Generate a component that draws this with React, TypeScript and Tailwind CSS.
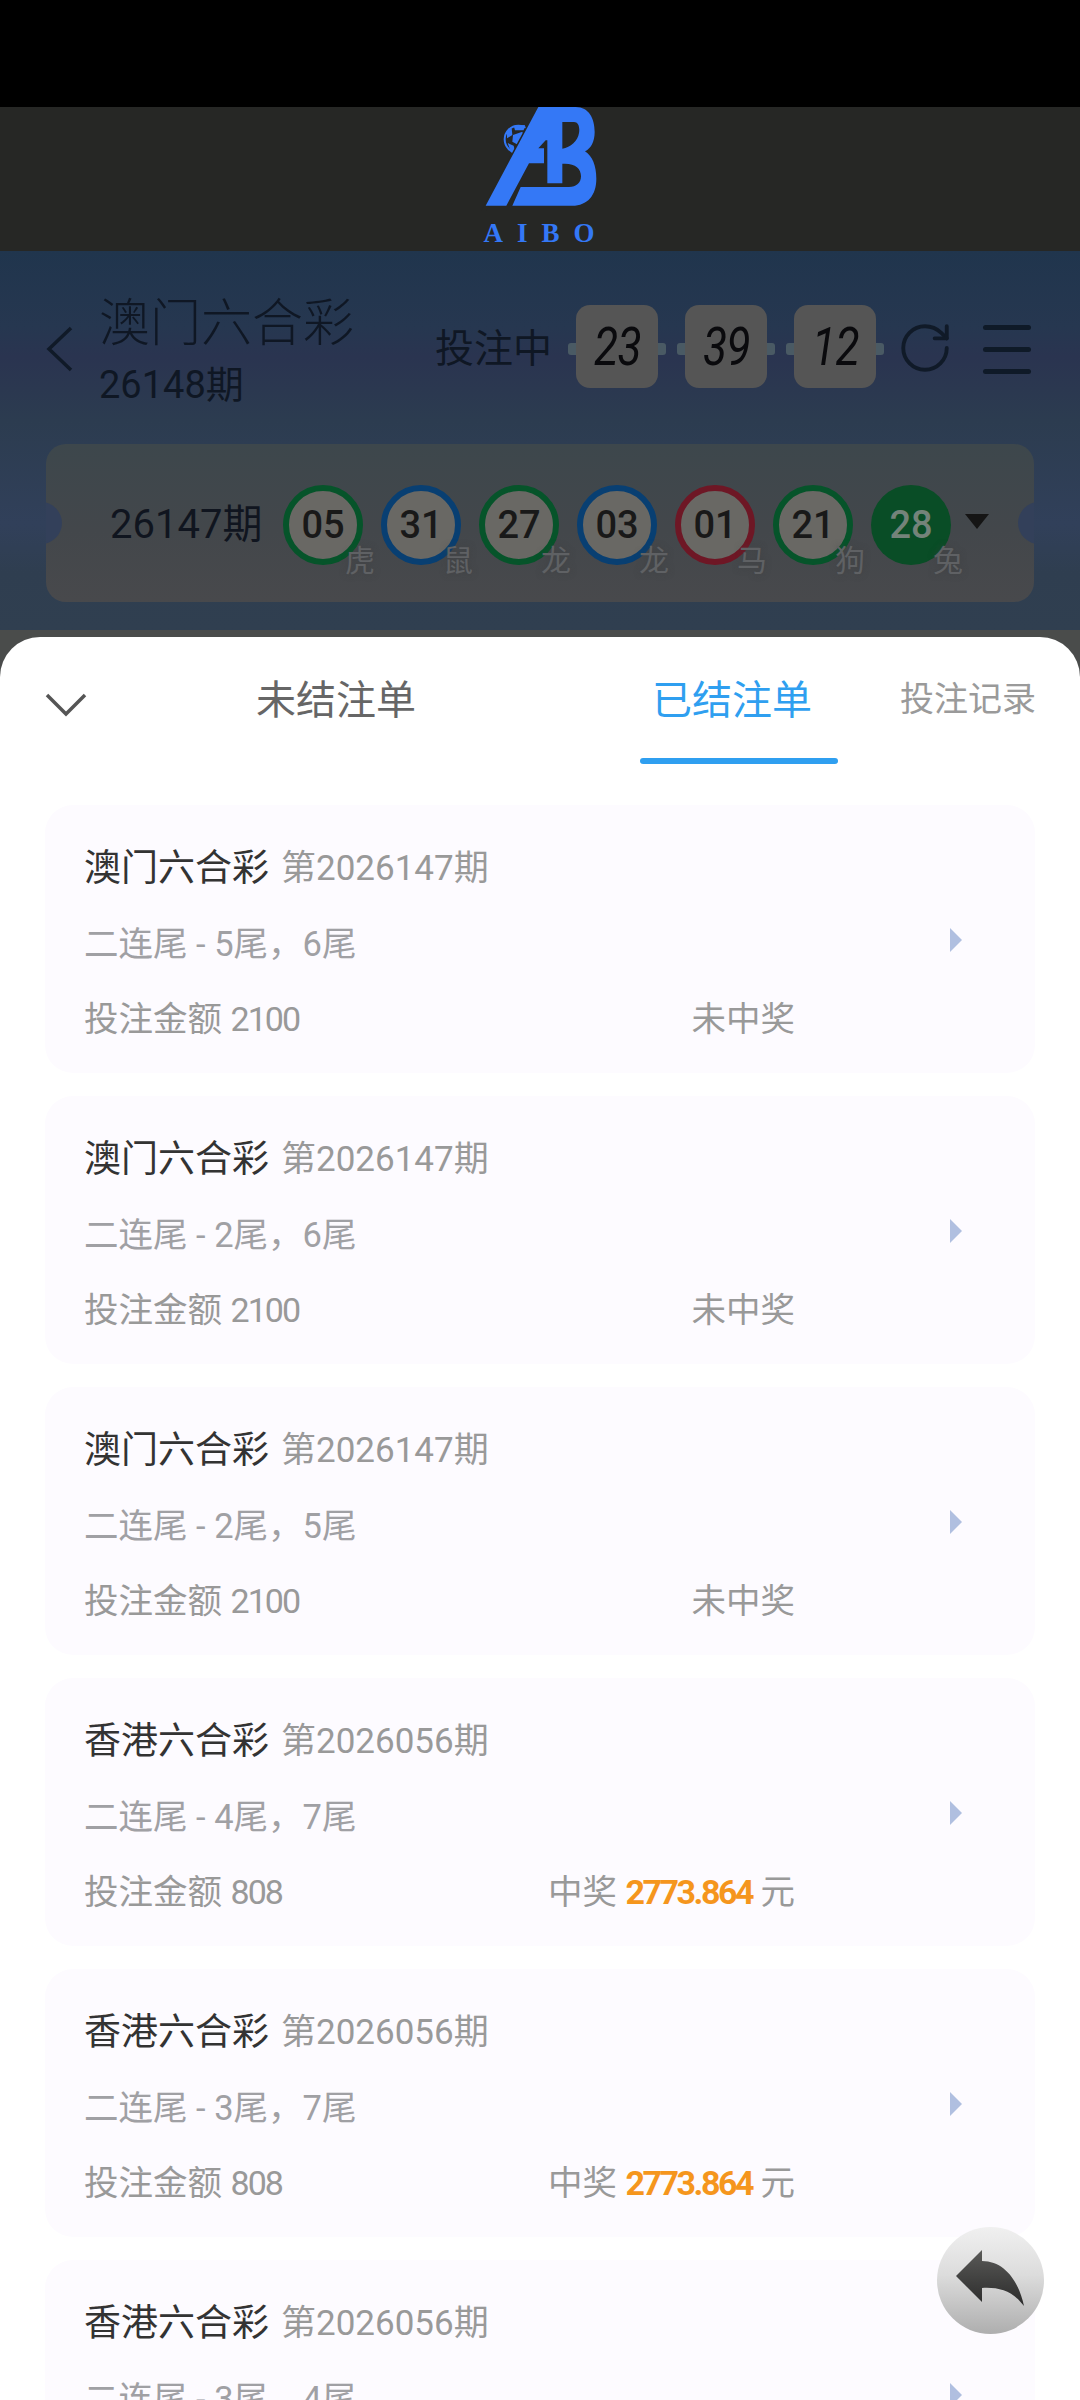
import React from "react";
import { RotateCw } from "lucide-react";

const balls = [
  { n: "05", z: "虎", ring: "border-[#06542a]" },
  { n: "31", z: "鼠", ring: "border-[#083f72]" },
  { n: "27", z: "龙", ring: "border-[#06542a]" },
  { n: "03", z: "龙", ring: "border-[#083f72]" },
  { n: "01", z: "马", ring: "border-[#6e1725]" },
  { n: "21", z: "狗", ring: "border-[#06542a]" },
];

const bets = [
  { game: "澳门六合彩", issue: "第2026147期", detail: "二连尾 - 5尾，6尾", amount: "2100", win: "" },
  { game: "澳门六合彩", issue: "第2026147期", detail: "二连尾 - 2尾，6尾", amount: "2100", win: "" },
  { game: "澳门六合彩", issue: "第2026147期", detail: "二连尾 - 2尾，5尾", amount: "2100", win: "" },
  { game: "香港六合彩", issue: "第2026056期", detail: "二连尾 - 4尾，7尾", amount: "808", win: "2773.864" },
  { game: "香港六合彩", issue: "第2026056期", detail: "二连尾 - 3尾，7尾", amount: "808", win: "2773.864" },
  { game: "香港六合彩", issue: "第2026056期", detail: "二连尾 - 3尾，4尾", amount: "808", win: "" },
];

function Logo() {
  return (
    <svg width="120" height="104" viewBox="0 0 360 312" className="shrink-0 -ml-[2px]">
      <circle cx="118" cy="97" r="41" fill="none" stroke="#3478f6" strokeWidth="6" />
      <path fill="#3478f6" d="M104 56L138 54L134 70L108 70ZM84 72L98 64L100 84L84 94ZM102 84L130 74L140 98L118 114L100 104ZM86 108L104 116L110 140L96 136Z" />
      <path stroke="#262725" strokeWidth="14" d="M170 20L12 316" />
      <path
        fill="#3478f6"
        fillRule="evenodd"
        d="M178 0H290C330 0 347 35 347 75C347 105 335 125 318 133C340 148 352 175 352 215C352 265 325 296 280 296H20ZM200 100L178 124H195V169H150L82 296H100L125 240H270C292 240 306 228 306 208C306 185 290 170 258 170H250V229H205V100ZM250 45H285C298 45 303 60 300 78C297 100 275 122 250 125Z"
      />
    </svg>
  );
}

function Flip({ v }: { v: string }) {
  return (
    <div className="relative w-[82px] h-[83px]">
      <div className="absolute left-[-8px] right-[-8px] top-[38px] h-[12px] rounded-[3px] bg-[#4a5a64]" />
      <div className="absolute inset-0 rounded-[14px] bg-[#555555] flex items-center justify-center">
        <span className="inline-block scale-x-[0.82] text-[54px] leading-none italic font-normal tracking-[-1px] text-[#0a0a0d]">{v}</span>
      </div>
    </div>
  );
}

function Ball({ n, z, ring }: { n: string; z: string; ring: string }) {
  return (
    <div className={`relative w-[80px] h-[80px] rounded-full border-[6px] ${ring} bg-[#696864] flex items-center justify-center shrink-0`}>
      <span className="text-[38px] leading-none font-medium text-[#191919]">{n}</span>
      <span className="absolute left-[56px] top-[55px] text-[30px] leading-none text-[#5f6164] [text-shadow:0_0_6px_rgba(60,60,60,0.6)]">{z}</span>
    </div>
  );
}

function Card({ b }: { b: (typeof bets)[number] }) {
  return (
    <div className="h-[268px] rounded-[28px] bg-[#fdfbff] pl-[39px] pt-[26px] flex items-start shrink-0">
      <div className="w-[711px]">
        <div className="h-[76px] flex items-center gap-[12px]">
          <span className="text-[37px] text-[#333333]">{b.game}</span>
          <span className="text-[35px] text-[#999999]">{b.issue}</span>
        </div>
        <div className="h-[76px] flex items-center text-[34.5px] text-[#a0a0a4]">{b.detail}</div>
        <div className="h-[74px] flex items-center justify-between text-[34.5px] text-[#999999]">
          <span>
            投注金额 <span className="text-[34px] tracking-[-2px]">{b.amount}</span>
          </span>
          {b.win ? (
            <span>
              中奖 <span className="text-[34px] font-bold tracking-[-2.5px] text-[#f5961d]">{b.win}</span> 元
            </span>
          ) : (
            <span>未中奖</span>
          )}
        </div>
      </div>
      <div className="ml-[155px] mt-[97px] w-0 h-0 border-y-[12px] border-y-transparent border-l-[12px] border-l-[#b0bfe0]" />
    </div>
  );
}

export default function App() {
  return (
    <div className="relative w-[1080px] h-[2400px] overflow-hidden flex flex-col bg-[#4a4c4b] font-[Roboto,'Noto_Sans_CJK_SC',sans-serif]">
      <div className="h-[107px] bg-black shrink-0" />
      <div className="h-[144px] bg-[#262725] flex flex-col items-center shrink-0">
        <Logo />
        <div className="mt-[11px] h-[22px] flex items-center justify-center font-['Liberation_Serif',serif] font-bold text-[27px] leading-none tracking-[14px] pl-[12px] text-[#3478f6]">
          AIBO
        </div>
      </div>

      <div className="h-[379px] shrink-0 bg-[linear-gradient(180deg,#20354d_0%,#263750_20%,#2a3450_28%,#2c3c50_45%,#31405a_72%,#2f3e50_85%,#303f50_100%)] pt-[46px]">
        <div className="flex items-center h-[104px] pl-[46px]">
          <svg width="28" height="46" viewBox="0 0 28 46" className="shrink-0 text-[#101a28]">
            <path d="M25 2L3 23L25 44" fill="none" stroke="currentColor" strokeWidth="3.5" />
          </svg>
          <div className="ml-[25px] w-[256px] flex flex-col">
            <span className="text-[51px] leading-[50px] mt-[4px] whitespace-nowrap font-light text-[#0f1724]">澳门六合彩</span>
            <span className="text-[38px] leading-[36px] mt-[18px] text-[#0f1724]">26148期</span>
          </div>
          <span className="ml-[80px] w-[116px] text-[39px] leading-none whitespace-nowrap text-[#0f1724]">投注中</span>
          <div className="ml-[25px] mt-[-5px] flex gap-[27px]">
            <Flip v="23" />
            <Flip v="39" />
            <Flip v="12" />
          </div>
          <RotateCw className="ml-[20px] w-[58px] h-[58px] mt-[-2px] shrink-0 text-[#101a28]" strokeWidth={1.6} />
          <div className="ml-[29px] w-[48px] flex flex-col gap-[17px]">
            <div className="h-[5px] rounded-full bg-[#0f1a28]" />
            <div className="h-[5px] rounded-full bg-[#0f1a28]" />
            <div className="h-[5px] rounded-full bg-[#0f1a28]" />
          </div>
        </div>

        <div className="relative overflow-hidden mt-[43px] mx-[46px] h-[158px] pt-[3px] rounded-[20px] bg-[linear-gradient(180deg,#3d474c_0%,#43474b_55%,#48494c_100%)] flex items-center pl-[64px]">
          <div className="absolute left-[-26px] top-[58px] w-[42px] h-[42px] rounded-full bg-[#33405a]" />
          <div className="absolute right-[-26px] top-[58px] w-[42px] h-[42px] rounded-full bg-[#33405a]" />
          <span className="w-[173px] shrink-0 text-[40px] leading-none text-[#10151f]">26147期</span>
          <div className="flex gap-[18px]">
            {balls.map((b) => (
              <Ball key={b.n} {...b} />
            ))}
            <div className="relative w-[80px] h-[80px] rounded-full bg-[#094d26] flex items-center justify-center shrink-0">
              <span className="text-[38px] leading-none font-medium text-[#74837a]">28</span>
              <span className="absolute left-[62px] top-[61px] text-[30px] leading-none text-[#5f6164] [text-shadow:0_0_6px_rgba(60,60,60,0.6)]">兔</span>
            </div>
          </div>
          <div className="ml-[14px] mt-[-6px] w-0 h-0 border-x-[12px] border-x-transparent border-t-[15px] border-t-[#151515]" />
        </div>
      </div>

      <div className="mt-[7px] flex-1 min-h-0 rounded-t-[40px] bg-white overflow-hidden">
        <div className="relative h-[127px] flex items-start pt-[39px] pl-[45px]">
          <svg width="42" height="24" viewBox="0 0 42 24" className="mt-[17px] shrink-0 text-[#555555]">
            <path d="M2 2L21 21L40 2" fill="none" stroke="currentColor" strokeWidth="3.5" />
          </svg>
          <span className="ml-[169px] text-[40px] leading-[50px] text-[#666666] whitespace-nowrap">未结注单</span>
          <div className="relative ml-[236px] h-[88px]">
            <span className="text-[40px] leading-[50px] text-[#2f9ff0] whitespace-nowrap">已结注单</span>
            <div className="absolute left-[-12px] w-[198px] bottom-0 h-[6px] rounded-[3px] bg-[#2f9ff0]" />
          </div>
          <span className="ml-[88px] text-[34px] leading-[46px] text-[#9a9a9a] whitespace-nowrap">投注记录</span>
        </div>
        <div className="mt-[41px] px-[45px] flex flex-col gap-[23px]">
          {bets.map((b, i) => (
            <Card key={i} b={b} />
          ))}
        </div>
      </div>

      <div className="absolute left-[937px] top-[2227px] w-[107px] h-[107px] rounded-full bg-[linear-gradient(180deg,#f0f0f0_0%,#dcdcdc_45%,#aeaeae_100%)]">
        <svg viewBox="0 0 107 107" className="w-full h-full">
          <defs>
            <linearGradient id="arrowFill" x1="0" y1="0" x2="0" y2="1">
              <stop offset="0" stopColor="#5a5a58" />
              <stop offset="1" stopColor="#2b2b2b" />
            </linearGradient>
          </defs>
          <path fill="url(#arrowFill)" d="M19 49L45 23V34C68 34 82 55 87 79C76 64 62 60 45 61V75Z" />
        </svg>
      </div>
    </div>
  );
}
